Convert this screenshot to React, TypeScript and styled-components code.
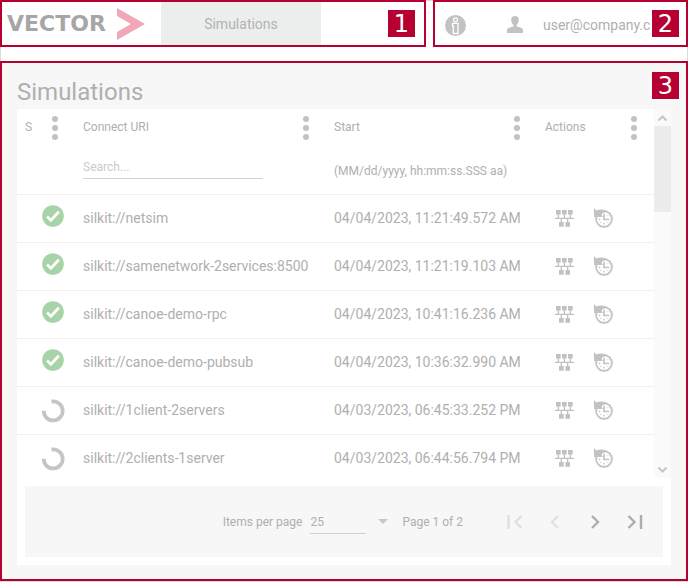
import React from "react";
import styled, { createGlobalStyle } from "styled-components";

const accent = "#b70032";
const muted = "#afafaf";
const iconGray = "#c2c2c2";

const GlobalStyle = createGlobalStyle`
  *, *::before, *::after { box-sizing: border-box; }
  body {
    margin: 0;
    background: #fff;
    color: ${muted};
    font-family: Roboto, "Liberation Sans", sans-serif;
    font-size: 14px;
    line-height: 20px;
  }
  button {
    border: 0;
    padding: 0;
    background: none;
    color: inherit;
    font: inherit;
    cursor: pointer;
  }
  svg { display: block; flex: none; }
`;

const Page = styled.div`
  display: flex;
  flex-direction: column;
  gap: 14px;
  height: 100vh;
  padding-bottom: 1px;
  box-shadow: inset 0 0 0 1px #d8dadc;
`;

const Header = styled.header`
  display: flex;
  gap: 7px;
  height: 47px;
  flex: none;
  background: #fff;
  box-shadow: inset 0 1px 0 #d8dadc;
`;

const Brand = styled.div`
  position: relative;
  flex: 1;
  display: flex;
  background: #fff;
  border: 2px solid ${accent};
`;

const Logo = styled.a`
  display: flex;
  align-items: center;
  justify-content: space-between;
  width: 159px;
  padding: 0 16px 0 5px;
  color: #a6a6a6;
  font-family: "DejaVu Sans", sans-serif;
  font-size: 22px;
  font-weight: 700;
  text-decoration: none;
`;

const NavTab = styled.a`
  display: flex;
  align-items: center;
  justify-content: center;
  width: 160px;
  background: #eceeed;
  color: #b2b2b2;
  text-decoration: none;
`;

const UserArea = styled.div`
  position: relative;
  flex: none;
  width: 255px;
  display: flex;
  align-items: center;
  padding: 4px 0 0 10px;
  background: #fff;
  border: 2px solid ${accent};
`;

const UserLink = styled.button`
  display: flex;
  align-items: center;
  gap: 20px;
  margin: 0 0 2px 41px;
`;

const Badge = styled.span<{ $right: number; $top: number }>`
  position: absolute;
  top: ${(p) => p.$top}px;
  right: ${(p) => p.$right}px;
  width: 27px;
  height: 27px;
  background: ${accent};
  color: #fff;
  font: 24px/29px "DejaVu Sans", sans-serif;
  text-align: center;
`;

const Panel = styled.main`
  position: relative;
  flex: 1;
  min-height: 0;
  display: flex;
  flex-direction: column;
  padding: 14px 15px;
  border: 2px solid ${accent};
  background: #f7f7f7;
`;

const Title = styled.h1`
  margin: 0 0 2px;
  font-size: 24px;
  font-weight: 400;
  line-height: 30px;
`;

const Card = styled.section`
  flex: 1;
  min-height: 0;
  display: flex;
  flex-direction: column;
  gap: 8px;
  background: #fff;
`;

const ListArea = styled.div`
  flex: 1;
  min-height: 0;
  display: flex;
`;

const ListViewport = styled.div`
  flex: 1;
  overflow: auto;
  scrollbar-width: none;
`;

const Table = styled.table`
  width: 100%;
  table-layout: fixed;
  border-spacing: 0;
`;

const Col = styled.col<{ $width?: number }>`
  width: ${(p) => (p.$width ? `${p.$width}px` : "auto")};
`;

const HeadCell = styled.th`
  height: 86px;
  padding: 0 0 0 8px;
  border-bottom: 1px solid #f1f1f1;
  vertical-align: top;
  font-size: 12px;
  font-weight: 400;
  text-align: left;
`;

const HeadTop = styled.div`
  display: flex;
  align-items: center;
  justify-content: space-between;
  height: 36px;
  padding-right: 16px;
`;

const MenuButton = styled.button`
  padding-top: 2px;
`;

const Filter = styled.input`
  display: block;
  width: 180px;
  height: 24px;
  margin-top: 10px;
  padding: 0;
  border: 0;
  border-bottom: 1px solid #d2d2d2;
  outline: 0;
  background: none;
  color: ${muted};
  font: 12px/20px Roboto, sans-serif;
  &::placeholder { color: #cacaca; opacity: 1; }
`;

const FormatHint = styled.div`
  margin-top: 16px;
`;

const Cell = styled.td`
  height: 48px;
  padding: 0 0 2px 8px;
  border-bottom: 1px solid #f1f1f1;
  white-space: nowrap;
`;

const Status = styled.div<{ $done: boolean }>`
  display: flex;
  padding: ${(p) => (p.$done ? "0 0 4px 16px" : "2px 0 0 16px")};
`;

const Actions = styled.div`
  display: flex;
  gap: 20px;
  padding: 1px 0 0 10px;
`;

const ScrollTrack = styled.div`
  display: flex;
  flex-direction: column;
  width: 17px;
  background: #fafafa;
`;

const ScrollButton = styled.button`
  display: flex;
  align-items: center;
  justify-content: center;
  height: 17px;
`;

const ScrollRun = styled.div`
  flex: 1;
`;

const ScrollThumb = styled.div`
  height: 86px;
  background: #ececec;
`;

const Pager = styled.footer`
  display: flex;
  align-items: center;
  justify-content: flex-end;
  height: 71px;
  flex: none;
  margin: 0 8px 8px;
  padding-right: 8px;
  background: #f7f7f7;
  font-size: 12px;
`;

const PageSizeLabel = styled.label`
  margin-right: 8px;
`;

const PageSize = styled.select`
  appearance: none;
  width: 56px;
  height: 24px;
  margin-right: 12px;
  padding: 2px 0 0;
  border: 0;
  border-bottom: 1px solid #d0d0d0;
  border-radius: 0;
  background: none;
  color: ${muted};
  font: 12px/20px Roboto, sans-serif;
`;

const PageStatus = styled.span`
  margin: 0 32px 0 14px;
`;

const PagerButton = styled.button`
  display: flex;
  align-items: center;
  justify-content: center;
  width: 40px;
  height: 40px;
  color: #adadad;
  &:disabled { color: #e0e0e0; }
`;

const Arrow = () => (
  <svg width="28" height="32" viewBox="0 0 28 32">
    <path d="M0 0 28 16 0 32V24L14 16 0 8Z" fill="#f2a6b7" />
  </svg>
);

const InfoIcon = () => (
  <svg width="21" height="21" viewBox="0 0 21 21">
    <circle cx="10.5" cy="10.5" r="10.5" fill={iconGray} />
    <circle cx="10.5" cy="4.8" r="2" fill={iconGray} stroke="#fff" strokeWidth="1.2" />
    <path d="M7.500 8.300h5.500v10.200H8.300v-7.500h-.8z" fill={iconGray} stroke="#fff" strokeWidth="1.3" />
  </svg>
);

const UserIcon = () => (
  <svg width="16" height="17" viewBox="0 0 16 17">
    <path
      d="M8 0C5.6 0 4.2 1.6 4.2 4c0 2.2 1 4.2 2.3 5v1.3L1.5 12C.5 12.5 0 13 0 14v3h16v-3c0-1-.5-1.5-1.500-2l-5-1.700V9c1.300-.8 2.300-2.800 2.300-5C11.800 1.600 10.400 0 8 0Z"
      fill={iconGray}
    />
  </svg>
);

const DotsIcon = () => (
  <svg width="8" height="24" viewBox="0 0 8 24" fill={iconGray}>
    <circle cx="4" cy="3" r="3" />
    <circle cx="4" cy="12" r="3" />
    <circle cx="4" cy="21" r="3" />
  </svg>
);

const SuccessIcon = () => (
  <svg width="24" height="22" viewBox="0 0 24 22">
    <circle cx="12" cy="11" r="10.8" fill="#a6d4a8" />
    <path d="m6 11.5 3.9 3.7 8-8.4" fill="none" stroke="#fff" strokeWidth="2.8" />
  </svg>
);

const SpinnerIcon = () => (
  <svg width="24" height="24" viewBox="0 0 24 24">
    <path
      d="M10.5 2.6A9.5 9.5 0 1 1 2.7 11.800"
      fill="none"
      stroke="#c4c6c6"
      strokeWidth="3.8"
    />
  </svg>
);

const NetworkIcon = () => (
  <svg width="19" height="17" viewBox="0 0 19 17" fill={iconGray}>
    <path d="M1 0h4.700v4.500H1zM7 0h4.700v4.500H7zM13 0h4.700v4.500H13zM4 12h4.700v4.700H4zM10.300 12H15v4.700h-4.700z" />
    <path d="M0 7.700h19V9H0zM2.700 4h1.300v4H2.700zM8.700 4H10v4H8.700zM14.700 4H16v4h-1.300zM5.700 8.500H7V12H5.700zM12 8.500h1.300V12H12z" />
  </svg>
);

const HistoryIcon = () => (
  <svg width="19" height="20" viewBox="0 0 19 20">
    <circle cx="10" cy="11" r="7.900" fill="none" stroke={iconGray} strokeWidth="1.800" />
    <path d="M0 0 2.500 2.500C6 .8 12 1.200 15 4.500 11.500 3.800 9 4.500 7.500 6.500L9 9H0Z" fill={iconGray} />
    <path d="M10 6v5.500h5.500" fill="none" stroke={iconGray} strokeWidth="1.700" />
    <path d="M9.300 15h1.500v1.500H9.300zM4.800 10.500h1.500v1.500H4.800zM6 14h1v1H6zM13.500 14h1v1h-1zM13.500 7h1v1h-1z" fill={iconGray} />
  </svg>
);

const ScrollArrow = ({ down = false }: { down?: boolean }) => (
  <svg width="9" height="6" viewBox="0 0 9 6" fill="none" stroke="#c6c6c6" strokeWidth="2">
    <path d={down ? "M.5 .5 4.500 4.500 8.500 .5" : "M.5 5.500 4.500 1.500 8.500 5.500"} />
  </svg>
);

type Direction = "first" | "previous" | "next" | "last";

const pagerPaths: Record<Direction, string> = {
  first: "M1.5 0v14M14.5 1 8.5 7l6 6",
  previous: "M11 1 5 7l6 6",
  next: "m5 1 6 6-6 6",
  last: "m1.5 1 6 6-6 6M14 0v14",
};

const PagerIcon = ({ direction }: { direction: Direction }) => (
  <svg width="16" height="14" viewBox="0 0 16 14" fill="none" stroke="currentColor" strokeWidth="2.4">
    <path d={pagerPaths[direction]} />
  </svg>
);

const SelectArrow = () => (
  <svg width="10" height="5" viewBox="0 0 10 5">
    <path d="M0 0h10L5 5Z" fill="#c8c8c8" />
  </svg>
);

const simulations = [
  { uri: "silkit://netsim", start: "04/04/2023, 11:21:49.572 AM", done: true },
  { uri: "silkit://samenetwork-2services:8500", start: "04/04/2023, 11:21:19.103 AM", done: true },
  { uri: "silkit://canoe-demo-rpc", start: "04/04/2023, 10:41:16.236 AM", done: true },
  { uri: "silkit://canoe-demo-pubsub", start: "04/04/2023, 10:36:32.990 AM", done: true },
  { uri: "silkit://1client-2servers", start: "04/03/2023, 06:45:33.252 PM", done: false },
  { uri: "silkit://2clients-1server", start: "04/03/2023, 06:44:56.794 PM", done: false },
];

const ColumnHead = ({ label, children }: { label: string; children?: React.ReactNode }) => (
  <HeadCell scope="col">
    <HeadTop>
      {label}
      <MenuButton type="button" aria-label={`${label} column menu`}>
        <DotsIcon />
      </MenuButton>
    </HeadTop>
    {children}
  </HeadCell>
);

export default function App() {
  return (
    <>
      <GlobalStyle />
      <Page>
        <Header>
          <Brand>
            <Logo href="#">
              VECTOR
              <Arrow />
            </Logo>
            <NavTab href="#simulations">Simulations</NavTab>
            <Badge $top={8} $right={9}>1</Badge>
          </Brand>
          <UserArea>
            <button type="button" aria-label="Information">
              <InfoIcon />
            </button>
            <UserLink type="button">
              <UserIcon />
              user@company.c
            </UserLink>
            <Badge $top={8} $right={7}>2</Badge>
          </UserArea>
        </Header>
        <Panel>
          <Title>Simulations</Title>
          <Card>
            <ListArea>
              <ListViewport>
                <Table>
                  <colgroup>
                    <Col $width={58} />
                    <Col />
                    <Col $width={211} />
                    <Col $width={117} />
                  </colgroup>
                  <thead>
                    <tr>
                      <ColumnHead label="S" />
                      <ColumnHead label="Connect URI">
                        <Filter type="text" placeholder="Search..." aria-label="Search connect URI" />
                      </ColumnHead>
                      <ColumnHead label="Start">
                        <FormatHint>(MM/dd/yyyy, hh:mm:ss.SSS aa)</FormatHint>
                      </ColumnHead>
                      <ColumnHead label="Actions" />
                    </tr>
                  </thead>
                  <tbody>
                    {simulations.map((s) => (
                      <tr key={s.uri}>
                        <Cell>
                          <Status $done={s.done}>{s.done ? <SuccessIcon /> : <SpinnerIcon />}</Status>
                        </Cell>
                        <Cell>{s.uri}</Cell>
                        <Cell>{s.start}</Cell>
                        <Cell>
                          <Actions>
                            <button type="button" aria-label="Show network">
                              <NetworkIcon />
                            </button>
                            <button type="button" aria-label="Show history">
                              <HistoryIcon />
                            </button>
                          </Actions>
                        </Cell>
                      </tr>
                    ))}
                  </tbody>
                </Table>
              </ListViewport>
              <ScrollTrack>
                <ScrollButton type="button" aria-label="Scroll up">
                  <ScrollArrow />
                </ScrollButton>
                <ScrollRun>
                  <ScrollThumb />
                </ScrollRun>
                <ScrollButton type="button" aria-label="Scroll down">
                  <ScrollArrow down />
                </ScrollButton>
              </ScrollTrack>
            </ListArea>
            <Pager>
              <PageSizeLabel htmlFor="page-size">Items per page</PageSizeLabel>
              <PageSize id="page-size" defaultValue="25">
                <option>10</option>
                <option>25</option>
                <option>50</option>
              </PageSize>
              <SelectArrow />
              <PageStatus>Page 1 of 2</PageStatus>
              <PagerButton type="button" aria-label="First page" disabled>
                <PagerIcon direction="first" />
              </PagerButton>
              <PagerButton type="button" aria-label="Previous page" disabled>
                <PagerIcon direction="previous" />
              </PagerButton>
              <PagerButton type="button" aria-label="Next page">
                <PagerIcon direction="next" />
              </PagerButton>
              <PagerButton type="button" aria-label="Last page">
                <PagerIcon direction="last" />
              </PagerButton>
            </Pager>
          </Card>
          <Badge $top={9} $right={7}>3</Badge>
        </Panel>
      </Page>
    </>
  );
}
